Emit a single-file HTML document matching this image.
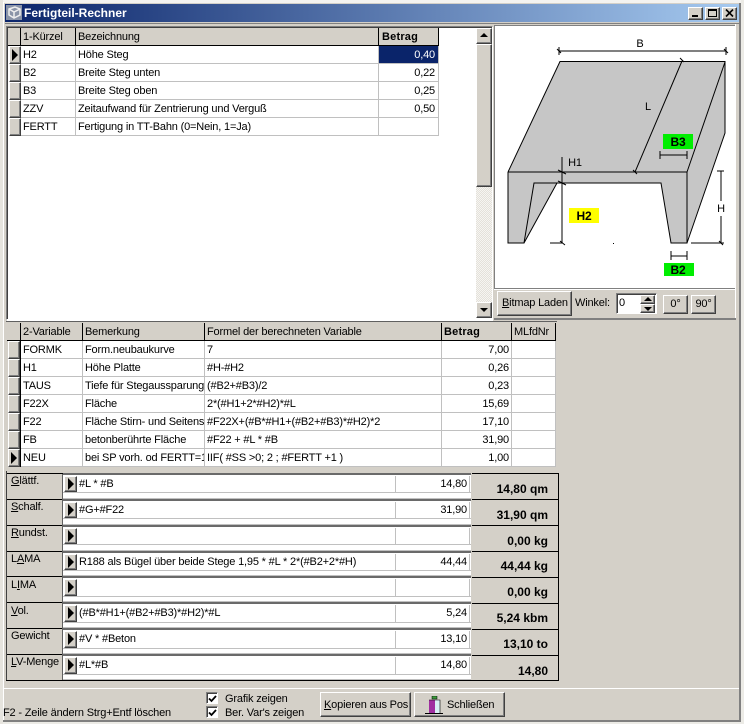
<!DOCTYPE html>
<html><head><meta charset="utf-8">
<style>
html,body{margin:0;padding:0;width:744px;height:724px;overflow:hidden;background:#d4d0c8}
body{position:relative;font:11px/13px "Liberation Sans",sans-serif;color:#000;letter-spacing:-.17px}
div,span{position:absolute;box-sizing:border-box;white-space:nowrap}
.btn{background:#d4d0c8;border:1px solid;border-color:#fff #404040 #404040 #fff;box-shadow:inset -1px -1px 0 #808080}
.ind{background:#d4d0c8;border:1px solid;border-color:#fff #404040 #404040 #fff;box-shadow:inset -1px -1px 0 #808080}
.tri{width:0;height:0;border-left:6px solid #000;border-top:6px solid transparent;border-bottom:6px solid transparent}
.hl{height:1px;background:#c0c0c0}
.vl{width:1px;background:#c0c0c0}
.k{background:#000}
.r{text-align:right}
.b{font-weight:bold;letter-spacing:.2px}
u{text-decoration:underline}
.cb{width:12px;height:12px;background:#fff;border:1px solid;border-color:#808080 #fff #fff #808080;box-shadow:inset 1px 1px 0 #404040}
.val{font-weight:bold;font-size:12px;letter-spacing:0;text-align:right}
.g{background:#6a6a6a;height:2px}
</style></head><body>
<!-- window frame -->
<div style="left:0;top:0;width:744px;height:3px;background:#f4f3f0"></div>
<div style="left:741px;top:0;width:3px;height:724px;background:#ecebe6"></div>
<div style="left:0;top:722px;width:744px;height:2px;background:#ecebe6"></div>
<div style="left:0;top:0;width:3px;height:724px;background:#e6e4de"></div>
<div style="left:3px;top:2px;width:1px;height:720px;background:#fff"></div>
<div style="left:5px;top:4px;width:734px;height:18px;background:linear-gradient(90deg,#0a246a,#a6caf0)"></div>
<div style="left:5px;top:23px;width:734px;height:1px;background:#808080"></div>
<div style="left:739px;top:3px;width:2px;height:719px;background:#808080"></div>
<div style="left:3px;top:720px;width:738px;height:2px;background:#808080"></div>
<!-- title -->
<svg style="position:absolute;left:6px;top:5px" width="16" height="15" viewBox="0 0 16 15"><rect width="16" height="15" fill="#8a94a8"/><path d="M3 4L9 2L14 4V10L8 13L3 10ZM3 4L8 7L14 4M8 7V13" fill="none" stroke="#eee" stroke-width="1.5"/></svg>
<div class="b" style="left:24px;top:6px;font-size:12px;line-height:14px;color:#fff;letter-spacing:0">Fertigteil-Rechner</div>
<div class="btn" style="left:688px;top:7px;width:15px;height:13px"><span style="left:3px;top:7px;width:6px;height:2px;background:#000"></span></div>
<div class="btn" style="left:705px;top:7px;width:15px;height:13px"><span style="left:2px;top:1px;width:9px;height:8px;border:1px solid #000;border-top-width:2px"></span></div>
<div class="btn" style="left:722px;top:7px;width:15px;height:13px"><svg style="position:absolute;left:2px;top:1px" width="10" height="9"><path d="M1 .5L8 7.5M8 .5L1 7.5" stroke="#000" stroke-width="1.6"/></svg></div>

<!-- grid 1 -->
<div style="left:6px;top:26px;width:487px;height:294px;background:#fff;border:1px solid;border-color:#808080 #fff #fff #808080;box-shadow:inset 1px 1px 0 #404040"></div>
<div style="left:8px;top:28px;width:431px;height:18px;background:#d4d0c8"></div>
<div class="k" style="left:8px;top:45px;width:431px;height:1px"></div>
<div class="k" style="left:75px;top:28px;width:1px;height:17px"></div>
<div class="k" style="left:378px;top:28px;width:1px;height:17px"></div>
<div class="k" style="left:438px;top:28px;width:1px;height:17px"></div>
<div class="k" style="left:20px;top:28px;width:1px;height:17px"></div>
<div style="left:23px;top:31px">1-Kürzel</div>
<div style="left:78px;top:31px">Bezeichnung</div>
<div class="b" style="left:382px;top:31px">Betrag</div>
<div class="ind" style="left:9px;top:46px;width:12px;height:18px"><span class="tri" style="left:2px;top:2px"></span></div>
<div class="ind" style="left:9px;top:64px;width:12px;height:18px"></div>
<div class="ind" style="left:9px;top:82px;width:12px;height:18px"></div>
<div class="ind" style="left:9px;top:100px;width:12px;height:18px"></div>
<div class="ind" style="left:9px;top:118px;width:12px;height:18px"></div>
<div class="hl" style="left:21px;top:63px;width:418px"></div>
<div class="hl" style="left:21px;top:81px;width:418px"></div>
<div class="hl" style="left:21px;top:99px;width:418px"></div>
<div class="hl" style="left:21px;top:117px;width:418px"></div>
<div class="hl" style="left:21px;top:135px;width:418px"></div>
<div class="vl" style="left:75px;top:46px;height:90px"></div>
<div class="vl" style="left:378px;top:46px;height:90px"></div>
<div class="vl" style="left:438px;top:46px;height:90px"></div>
<div style="left:379px;top:46px;width:59px;height:17px;background:#0a246a"></div>
<div style="left:23px;top:49px">H2</div><div style="left:78px;top:49px">Höhe Steg</div><div class="r" style="left:379px;top:49px;width:56px;color:#fff">0,40</div>
<div style="left:23px;top:67px">B2</div><div style="left:78px;top:67px">Breite Steg unten</div><div class="r" style="left:379px;top:67px;width:56px">0,22</div>
<div style="left:23px;top:85px">B3</div><div style="left:78px;top:85px">Breite Steg oben</div><div class="r" style="left:379px;top:85px;width:56px">0,25</div>
<div style="left:23px;top:103px">ZZV</div><div style="left:78px;top:103px">Zeitaufwand für Zentrierung und Verguß</div><div class="r" style="left:379px;top:103px;width:56px">0,50</div>
<div style="left:23px;top:121px">FERTT</div><div style="left:78px;top:121px">Fertigung in TT-Bahn (0=Nein, 1=Ja)</div>
<!-- scrollbar -->
<div style="left:476px;top:28px;width:16px;height:290px;background-color:#eeece8;background-image:repeating-conic-gradient(#e4e1da 0 25%,#f6f5f2 0 50%);background-size:2px 2px"></div>
<div class="btn" style="left:476px;top:28px;width:16px;height:16px"><span style="left:3px;top:4px;width:0;height:0;border-left:4px solid transparent;border-right:4px solid transparent;border-bottom:4px solid #000"></span></div>
<div class="btn" style="left:476px;top:44px;width:16px;height:143px"></div>
<div class="btn" style="left:476px;top:302px;width:16px;height:16px"><span style="left:3px;top:5px;width:0;height:0;border-left:4px solid transparent;border-right:4px solid transparent;border-top:4px solid #000"></span></div>

<!-- diagram panel -->
<div style="left:494px;top:25px;width:241px;height:264px;background:#fff;border-top:1px solid #808080;border-left:1px solid #808080"></div>
<div style="left:494px;top:288px;width:241px;height:1px;background:#808080"></div>
<div style="left:494px;top:289px;width:241px;height:1px;background:#fff"></div>
<div style="left:735px;top:24px;width:1px;height:295px;background:#fff"></div>
<div style="left:736px;top:24px;width:3px;height:296px;background:#d4d0c8"></div>
<svg style="position:absolute;left:494px;top:26px" width="241" height="262" viewBox="494 26 241 262">
<g stroke="#000" fill="none" stroke-width="1">
<path d="M508 172L560 61.5H725V133L687 243H671L661 183H557L524 243H508Z" fill="#c6c6c6" stroke="none"/>
<path d="M508 172L560 61.5H725V133L687 243M508 172H687V243H671L661 183H534L524 243H508V172M524 243L557 183M725 62L687 172M682 61L635 172" />
<path d="M559 51H726M559 47V55M726 47V55M557 49L561 53M724 49L728 53M680 58L684 62M633 170L637 174" />
<path d="M562 157V243M558 170L566 174M558 181L566 185M550 243H563M560 241L565 245" />
<path d="M660 155H687M660 151V159M687 151V159" />
<path d="M721 171V201M721 216V243M717 171H724M691 243H724M719 241L723 245" />
<path d="M671 256H687M671 251V260M687 251V260" />
</g>
<rect x="613" y="243" width="1" height="1" fill="#000"/>
<rect x="569" y="208" width="30" height="15" fill="#ffff00"/>
<rect x="663" y="134" width="30" height="15" fill="#00ee00"/>
<rect x="664" y="263" width="30" height="13" fill="#00ee00"/>
<g font-family="Liberation Sans, sans-serif" font-size="11" text-anchor="middle">
<text x="640" y="47">B</text><text x="648" y="110">L</text><text x="575" y="166">H1</text><text x="721" y="212">H</text>
<text x="584" y="220" font-weight="bold" font-size="12">H2</text><text x="678" y="146" font-weight="bold" font-size="12">B3</text><text x="678" y="274" font-weight="bold" font-size="12">B2</text>
</g></svg>
<div class="btn" style="left:497px;top:291px;width:75px;height:25px"></div>
<div style="left:502px;top:297px"><u>B</u>itmap Laden</div>
<div style="left:575px;top:297px">Winkel:</div>
<div style="left:616px;top:293px;width:41px;height:21px;background:#fff;border:1px solid;border-color:#808080 #fff #fff #808080;box-shadow:inset 1px 1px 0 #404040"></div>
<div style="left:619px;top:297px">0</div>
<div class="btn" style="left:640px;top:295px;width:15px;height:9px"><span style="left:3px;top:1px;width:0;height:0;border-left:4px solid transparent;border-right:4px solid transparent;border-bottom:4px solid #000"></span></div>
<div class="btn" style="left:640px;top:304px;width:15px;height:9px"><span style="left:3px;top:2px;width:0;height:0;border-left:4px solid transparent;border-right:4px solid transparent;border-top:4px solid #000"></span></div>
<div class="btn" style="left:663px;top:295px;width:25px;height:19px;text-align:center;line-height:17px">0°</div>
<div class="btn" style="left:691px;top:295px;width:25px;height:19px;text-align:center;line-height:17px">90°</div>
<div style="left:494px;top:318px;width:242px;height:2px;background:#808080"></div>
<div style="left:7px;top:320px;width:486px;height:1px;background:#fff"></div>

<!-- grid 2 -->
<div style="left:6px;top:321px;width:551px;height:150px;background:#d4d0c8;border-top:1px solid #606060"></div>
<div style="left:21px;top:341px;width:535px;height:126px;background:#fff"></div>
<div class="k" style="left:7px;top:340px;width:549px;height:1px"></div>
<div class="k" style="left:20px;top:323px;width:1px;height:17px"></div>
<div class="k" style="left:82px;top:323px;width:1px;height:17px"></div>
<div class="k" style="left:204px;top:323px;width:1px;height:17px"></div>
<div class="k" style="left:441px;top:323px;width:1px;height:17px"></div>
<div class="k" style="left:511px;top:323px;width:1px;height:17px"></div>
<div class="k" style="left:555px;top:323px;width:1px;height:17px"></div>
<div style="left:23px;top:326px">2-Variable</div>
<div style="left:85px;top:326px">Bemerkung</div>
<div style="left:207px;top:326px">Formel der berechneten Variable</div>
<div class="b" style="left:444px;top:326px">Betrag</div>
<div style="left:514px;top:326px">MLfdNr</div>
<div class="ind" style="left:8px;top:341px;width:12px;height:18px"></div>
<div class="ind" style="left:8px;top:359px;width:12px;height:18px"></div>
<div class="ind" style="left:8px;top:377px;width:12px;height:18px"></div>
<div class="ind" style="left:8px;top:395px;width:12px;height:18px"></div>
<div class="ind" style="left:8px;top:413px;width:12px;height:18px"></div>
<div class="ind" style="left:8px;top:431px;width:12px;height:18px"></div>
<div class="ind" style="left:8px;top:449px;width:12px;height:18px"><span class="tri" style="left:2px;top:2px"></span></div>
<div class="k" style="left:20px;top:341px;width:1px;height:126px"></div>
<div class="hl" style="left:21px;top:358px;width:535px"></div>
<div class="hl" style="left:21px;top:376px;width:535px"></div>
<div class="hl" style="left:21px;top:394px;width:535px"></div>
<div class="hl" style="left:21px;top:412px;width:535px"></div>
<div class="hl" style="left:21px;top:430px;width:535px"></div>
<div class="hl" style="left:21px;top:448px;width:535px"></div>
<div class="hl" style="left:21px;top:466px;width:535px"></div>
<div class="vl" style="left:82px;top:341px;height:126px"></div>
<div class="vl" style="left:204px;top:341px;height:126px"></div>
<div class="vl" style="left:441px;top:341px;height:126px"></div>
<div class="vl" style="left:511px;top:341px;height:126px"></div>
<div class="vl" style="left:555px;top:341px;height:126px"></div>
<div style="left:23px;top:344px">FORMK</div><div style="left:85px;top:344px">Form.neubaukurve</div><div style="left:207px;top:344px">7</div><div class="r" style="left:442px;top:344px;width:67px">7,00</div>
<div style="left:23px;top:362px">H1</div><div style="left:85px;top:362px">Höhe Platte</div><div style="left:207px;top:362px">#H-#H2</div><div class="r" style="left:442px;top:362px;width:67px">0,26</div>
<div style="left:23px;top:380px">TAUS</div><div style="left:85px;top:380px;width:119px;overflow:hidden">Tiefe für Stegaussparung</div><div style="left:207px;top:380px">(#B2+#B3)/2</div><div class="r" style="left:442px;top:380px;width:67px">0,23</div>
<div style="left:23px;top:398px">F22X</div><div style="left:85px;top:398px">Fläche</div><div style="left:207px;top:398px">2*(#H1+2*#H2)*#L</div><div class="r" style="left:442px;top:398px;width:67px">15,69</div>
<div style="left:23px;top:416px">F22</div><div style="left:85px;top:416px;width:119px;overflow:hidden">Fläche Stirn- und Seitens</div><div style="left:207px;top:416px">#F22X+(#B*#H1+(#B2+#B3)*#H2)*2</div><div class="r" style="left:442px;top:416px;width:67px">17,10</div>
<div style="left:23px;top:434px">FB</div><div style="left:85px;top:434px">betonberührte Fläche</div><div style="left:207px;top:434px">#F22 + #L * #B</div><div class="r" style="left:442px;top:434px;width:67px">31,90</div>
<div style="left:23px;top:452px">NEU</div><div style="left:85px;top:452px;width:119px;overflow:hidden">bei SP vorh. od FERTT=1</div><div style="left:207px;top:452px">IIF( #SS &gt;0; 2 ; #FERTT +1 )</div><div class="r" style="left:442px;top:452px;width:67px">1,00</div>

<!-- formula rows -->
<div style="left:6px;top:471px;width:1px;height:210px;background:#404040"></div>
<div style="left:472px;top:473px;width:87px;height:208px;border:1px solid #000;border-left:none"></div>
<div style="left:6px;top:680px;width:466px;height:1px;background:#000"></div>

<!-- row 1 -->
<div class="k" style="left:7px;top:473px;width:56px;height:1px"></div><div class="g" style="left:63px;top:473px;width:408px"></div><div style="left:63px;top:475px;width:408px;height:24px;background:#fff"></div><div class="ind" style="left:64px;top:476px;width:13px;height:16px"><span class="tri" style="left:3px;top:1px"></span></div><div style="left:63px;top:492px;width:408px;height:1px;background:#c0c0c0"></div><div style="left:63px;top:498px;width:408px;height:1px;background:#c0c0c0"></div><div class="vl" style="left:395px;top:476px;height:16px"></div><div class="vl" style="left:469px;top:476px;height:17px"></div>
<div style="left:11px;top:475px"><u>G</u>lättf.</div><div style="left:79px;top:478px">#L * #B</div><div class="r" style="left:396px;top:478px;width:71px">14,80</div>
<!-- row 2 -->
<div class="k" style="left:7px;top:499px;width:56px;height:1px"></div><div class="g" style="left:63px;top:499px;width:408px"></div><div style="left:63px;top:501px;width:408px;height:24px;background:#fff"></div><div class="ind" style="left:64px;top:502px;width:13px;height:16px"><span class="tri" style="left:3px;top:1px"></span></div><div style="left:63px;top:518px;width:408px;height:1px;background:#c0c0c0"></div><div style="left:63px;top:524px;width:408px;height:1px;background:#c0c0c0"></div><div class="vl" style="left:395px;top:502px;height:16px"></div><div class="vl" style="left:469px;top:502px;height:17px"></div>
<div style="left:11px;top:501px"><u>S</u>chalf.</div><div style="left:79px;top:504px">#G+#F22</div><div class="r" style="left:396px;top:504px;width:71px">31,90</div>
<!-- row 3 -->
<div class="k" style="left:7px;top:525px;width:56px;height:1px"></div><div class="g" style="left:63px;top:525px;width:408px"></div><div style="left:63px;top:527px;width:408px;height:24px;background:#fff"></div><div class="ind" style="left:64px;top:528px;width:13px;height:16px"><span class="tri" style="left:3px;top:1px"></span></div><div style="left:63px;top:544px;width:408px;height:1px;background:#c0c0c0"></div><div style="left:63px;top:550px;width:408px;height:1px;background:#c0c0c0"></div><div class="vl" style="left:395px;top:528px;height:16px"></div><div class="vl" style="left:469px;top:528px;height:17px"></div>
<div style="left:11px;top:527px"><u>R</u>undst.</div>
<!-- row 4 -->
<div class="k" style="left:7px;top:551px;width:56px;height:1px"></div><div class="g" style="left:63px;top:551px;width:408px"></div><div style="left:63px;top:553px;width:408px;height:23px;background:#fff"></div><div class="ind" style="left:64px;top:554px;width:13px;height:16px"><span class="tri" style="left:3px;top:1px"></span></div><div style="left:63px;top:570px;width:408px;height:1px;background:#c0c0c0"></div><div style="left:63px;top:575px;width:408px;height:1px;background:#c0c0c0"></div><div class="vl" style="left:395px;top:554px;height:16px"></div><div class="vl" style="left:469px;top:554px;height:17px"></div>
<div style="left:11px;top:553px">L<u>A</u>MA</div><div style="left:79px;top:556px">R188 als Bügel über beide Stege 1,95 * #L * 2*(#B2+2*#H)</div><div class="r" style="left:396px;top:556px;width:71px">44,44</div>
<!-- row 5 -->
<div class="k" style="left:7px;top:576px;width:56px;height:1px"></div><div class="g" style="left:63px;top:576px;width:408px"></div><div style="left:63px;top:578px;width:408px;height:24px;background:#fff"></div><div class="ind" style="left:64px;top:579px;width:13px;height:17px"><span class="tri" style="left:3px;top:1px"></span></div><div style="left:63px;top:596px;width:408px;height:1px;background:#c0c0c0"></div><div style="left:63px;top:601px;width:408px;height:1px;background:#c0c0c0"></div><div class="vl" style="left:395px;top:579px;height:17px"></div><div class="vl" style="left:469px;top:579px;height:18px"></div>
<div style="left:11px;top:579px">L<u>I</u>MA</div>
<!-- row 6 -->
<div class="k" style="left:7px;top:602px;width:56px;height:1px"></div><div class="g" style="left:63px;top:602px;width:408px"></div><div style="left:63px;top:604px;width:408px;height:24px;background:#fff"></div><div class="ind" style="left:64px;top:605px;width:13px;height:17px"><span class="tri" style="left:3px;top:1px"></span></div><div style="left:63px;top:622px;width:408px;height:1px;background:#c0c0c0"></div><div style="left:63px;top:627px;width:408px;height:1px;background:#c0c0c0"></div><div class="vl" style="left:395px;top:605px;height:17px"></div><div class="vl" style="left:469px;top:605px;height:18px"></div>
<div style="left:11px;top:605px"><u>V</u>ol.</div><div style="left:79px;top:607px">(#B*#H1+(#B2+#B3)*#H2)*#L</div><div class="r" style="left:396px;top:607px;width:71px">5,24</div>
<!-- row 7 -->
<div class="k" style="left:7px;top:628px;width:56px;height:1px"></div><div class="g" style="left:63px;top:628px;width:408px"></div><div style="left:63px;top:630px;width:408px;height:24px;background:#fff"></div><div class="ind" style="left:64px;top:631px;width:13px;height:17px"><span class="tri" style="left:3px;top:1px"></span></div><div style="left:63px;top:648px;width:408px;height:1px;background:#c0c0c0"></div><div style="left:63px;top:653px;width:408px;height:1px;background:#c0c0c0"></div><div class="vl" style="left:395px;top:631px;height:17px"></div><div class="vl" style="left:469px;top:631px;height:18px"></div>
<div style="left:11px;top:630px">Gewicht</div><div style="left:79px;top:633px">#V * #Beton</div><div class="r" style="left:396px;top:633px;width:71px">13,10</div>
<!-- row 8 -->
<div class="k" style="left:7px;top:654px;width:56px;height:1px"></div><div class="g" style="left:63px;top:654px;width:408px"></div><div style="left:63px;top:656px;width:408px;height:24px;background:#fff"></div><div class="ind" style="left:64px;top:657px;width:13px;height:17px"><span class="tri" style="left:3px;top:1px"></span></div><div style="left:63px;top:674px;width:408px;height:1px;background:#c0c0c0"></div><div style="left:63px;top:679px;width:408px;height:1px;background:#c0c0c0"></div><div class="vl" style="left:395px;top:657px;height:17px"></div><div class="vl" style="left:469px;top:657px;height:18px"></div>
<div style="left:11px;top:656px"><u>L</u>V-Menge</div><div style="left:79px;top:659px">#L*#B</div><div class="r" style="left:396px;top:659px;width:71px">14,80</div>
<div class="vl" style="left:62px;top:474px;height:206px;background:#606060"></div>

<!-- value boxes -->
<div class="k" style="left:472px;top:499px;width:87px;height:1px"></div>
<div class="k" style="left:472px;top:525px;width:87px;height:1px"></div>
<div class="k" style="left:472px;top:551px;width:87px;height:1px"></div>
<div class="k" style="left:472px;top:577px;width:87px;height:1px"></div>
<div class="k" style="left:472px;top:603px;width:87px;height:1px"></div>
<div class="k" style="left:472px;top:629px;width:87px;height:1px"></div>
<div class="k" style="left:472px;top:655px;width:87px;height:1px"></div>
<div class="val" style="left:472px;top:483px;width:76px">14,80 qm</div>
<div class="val" style="left:472px;top:509px;width:76px">31,90 qm</div>
<div class="val" style="left:472px;top:535px;width:76px">0,00 kg</div>
<div class="val" style="left:472px;top:560px;width:76px">44,44 kg</div>
<div class="val" style="left:472px;top:586px;width:76px">0,00 kg</div>
<div class="val" style="left:472px;top:612px;width:76px">5,24 kbm</div>
<div class="val" style="left:472px;top:638px;width:76px">13,10 to</div>
<div class="val" style="left:472px;top:665px;width:76px">14,80</div>

<!-- bottom -->
<div style="left:4px;top:688px;width:735px;height:1px;background:#fff"></div>
<div style="left:3px;top:707px">F2 - Zeile ändern Strg+Entf löschen</div>
<div class="cb" style="left:206px;top:692px"><svg style="position:absolute;left:1px;top:1px" width="10" height="10"><path d="M1 4.5L3.5 7L8 2" fill="none" stroke="#000" stroke-width="1.8"/></svg></div>
<div class="cb" style="left:206px;top:706px"><svg style="position:absolute;left:1px;top:1px" width="10" height="10"><path d="M1 4.5L3.5 7L8 2" fill="none" stroke="#000" stroke-width="1.8"/></svg></div>
<div style="left:225px;top:693px">Grafik zeigen</div>
<div style="left:225px;top:707px">Ber. Var's zeigen</div>
<div class="btn" style="left:320px;top:692px;width:91px;height:25px"></div>
<div style="left:324px;top:699px"><u>K</u>opieren aus Pos</div>
<div class="btn" style="left:414px;top:692px;width:91px;height:25px"></div>
<svg style="position:absolute;left:425px;top:696px" width="19" height="18" viewBox="0 0 19 18"><rect x="7" y="0" width="5" height="3" fill="#3a9a3a" stroke="#000" stroke-width=".5"/><rect x="4" y="4" width="6" height="13" fill="#a030a0"/><rect x="10" y="4" width="5" height="13" fill="#d8f0f4"/><path d="M0 17.5H18" stroke="#000"/><path d="M4 4H15V17" fill="none" stroke="#000" stroke-width=".6"/></svg>
<div style="left:447px;top:699px">Schließen</div>
</body></html>
